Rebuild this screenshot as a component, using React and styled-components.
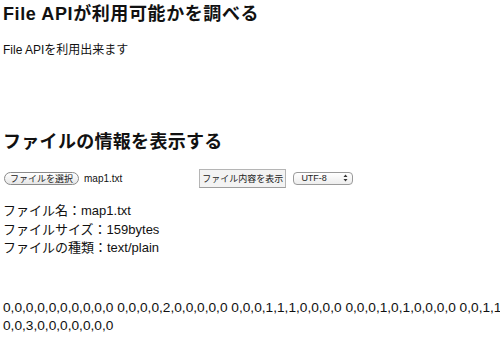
import React, { useState } from 'react';
import styled, { createGlobalStyle } from 'styled-components';

// ページ全体のスタイル
const GlobalStyle = createGlobalStyle`
  html, body {
    margin: 0;
    padding: 0;
    background: #fff;
    overflow: hidden;
  }
  body {
    font-family: "Liberation Sans", "Noto Sans CJK JP", sans-serif;
    color: #111;
  }
`;

const Page = styled.div`
  padding: 0 3px;
  width: 820px;
`;

const Heading = styled.h1`
  margin: ${(p) => p.$top}px 0 0;
  font-size: 18px;
  line-height: 24px;
  font-weight: bold;
  letter-spacing: ${(p) => p.$spacing || 0}px;
  color: #111;
`;

const Message = styled.p`
  margin: 16px 0 0;
  font-size: 12px;
  line-height: 16px;
`;

const Controls = styled.div`
  display: flex;
  align-items: center;
  margin-top: 14px;
  height: 20px;
  font-size: 10px;
`;

const FilePick = styled.button`
  margin-left: 1px;
  height: 13px;
  padding: 0 5px;
  border: 1px solid #8a8a8a;
  border-radius: 7px;
  background: linear-gradient(#ffffff, #e6e6e6);
  font-family: "Noto Sans CJK JP", sans-serif;
  font-size: 9px;
  line-height: 11px;
  white-space: nowrap;
  color: #222;
`;

const FileName = styled.span`
  margin-left: 5px;
  font-size: 10px;
  color: #111;
`;

const ShowButton = styled.button`
  margin-left: 77px;
  height: 19px;
  width: 87px;
  padding: 0;
  border: 1px solid #b5b5b5;
  border-bottom-color: #9d9d9d;
  background: #f3f3f3;
  font-family: "Noto Sans CJK JP", sans-serif;
  font-size: 9px;
  white-space: nowrap;
  color: #222;
`;

const SelectBox = styled.div`
  margin-left: 7px;
  width: 60px;
  height: 13px;
  display: flex;
  align-items: center;
  justify-content: space-between;
  padding: 0 4px 0 7px;
  box-sizing: border-box;
  border: 1px solid #9a9a9a;
  border-radius: 4px;
  background: linear-gradient(#ffffff, #ededed);
  font-size: 9px;
  color: #222;
`;

const InfoList = styled.div`
  margin-top: 14px;
  font-size: 13px;
  line-height: 18.5px;
`;

const Data = styled.p`
  margin: 41px 0 0;
  font-size: 13.7px;
  line-height: 18px;
`;

const rows = [
  '0,0,0,0,0,0,0,0,0,0',
  '0,0,0,0,2,0,0,0,0,0',
  '0,0,0,1,1,1,0,0,0,0',
  '0,0,0,1,0,1,0,0,0,0',
  '0,0,1,1,0,1,1,0,0,0',
  '0,0,1,0,0,0,1,0,0,0',
  '0,1,1,0,0,0,1,1,0,0',
  '0,0,3,0,0,0,0,0,0,0',
];

const Arrows = () => (
  <svg width="5" height="8" viewBox="0 0 5 8">
    <path d="M2.5 0.5 L4.5 3 L0.5 3 Z M2.5 7.5 L4.5 5 L0.5 5 Z" fill="#333" />
  </svg>
);

const App = () => {
  const [encoding] = useState('UTF-8');

  return (
    <Page>
      <GlobalStyle />
      <Heading $top={2} $spacing={0.6}>File APIが利用可能かを調べる</Heading>
      <Message>File APIを利用出来ます</Message>

      <Heading as="h2" $top={72} $spacing={0.3}>ファイルの情報を表示する</Heading>
      <Controls>
        <FilePick>ファイルを選択</FilePick>
        <FileName>map1.txt</FileName>
        <ShowButton>ファイル内容を表示</ShowButton>
        <SelectBox>
          <span>{encoding}</span>
          <Arrows />
        </SelectBox>
      </Controls>

      <InfoList>
        <div>ファイル名：map1.txt</div>
        <div>ファイルサイズ：159bytes</div>
        <div>ファイルの種類：text/plain</div>
      </InfoList>

      <Data>{rows.join(' ')}</Data>
    </Page>
  );
};

export default App;
